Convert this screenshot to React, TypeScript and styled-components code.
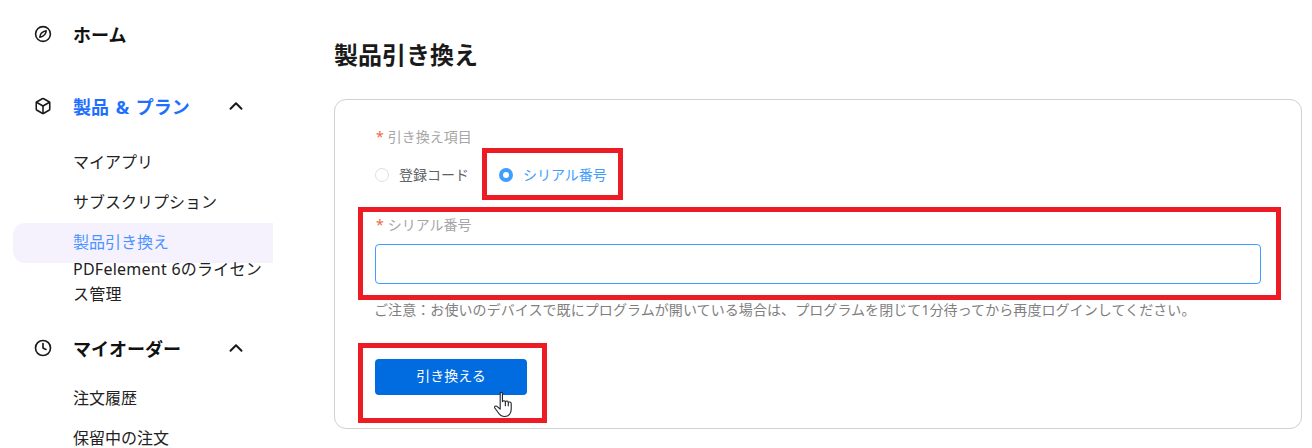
import React from 'react';
import styled, { createGlobalStyle } from 'styled-components';
import { Box, ChevronUp, Clock } from 'lucide-react';

const GlobalStyle = createGlobalStyle`
    html, body {
        margin: 0;
        height: 448px;
        overflow: hidden;
        background: #fff;
    }
    body {
        font-family: 'Noto Sans', 'Noto Sans CJK JP', sans-serif;
    }
`

function CompassIcon() {
    return (
        <svg width="18" height="18" viewBox="0 0 18 18" fill="none" stroke="#1a1a1a" strokeWidth="1.6">
            <circle cx="9" cy="9" r="7.4" />
            <path d="M12.2 5.8 C12 8.8 10 11.4 5.8 12.2 C6 9.2 8 6.6 12.2 5.8 Z" strokeLinejoin="round" />
        </svg>
    );
}

function HandCursor() {
    return (
        <svg width="18" height="25" viewBox="0.5 0.5 16 24.6" preserveAspectRatio="none" fill="#fff" stroke="#23272e" strokeWidth="1" strokeLinejoin="round">
            <path d="M6 1.8 C6 .6 8 .6 8 1.8 V10 C8.6 8.6 10.4 8.8 10.6 10.2 C11.2 9 13 9.2 13.2 10.8 C14 9.8 15.8 10.2 15.8 11.8 V17.5 C15.8 21 14 24.6 10 24.6 C6.6 24.6 5.4 22.8 4 20.4 L1.2 16.2 C.4 14.8 2.2 13.6 3.4 14.8 L6 17.4 Z" />
            <path d="M10.6 10.2 V14.5 M13.2 10.8 V14.5" fill="none" />
        </svg>
    );
}

function App() {
    return (
        <>
        <GlobalStyle />
        <Page>
            <Sidebar>
                <HomeRow>
                    <IconSlot><CompassIcon /></IconSlot>
                    <SectionTitle>ホーム</SectionTitle>
                </HomeRow>

                <SectionRow>
                    <IconSlot><Box size={18} strokeWidth={2.1} color="#1a1a1a" /></IconSlot>
                    <SectionTitle $active>製品 &amp; プラン</SectionTitle>
                    <Chevron><ChevronUp size={22} strokeWidth={2.2} color="#1a1a1a" /></Chevron>
                </SectionRow>
                <SubList>
                    <SubItem>マイアプリ</SubItem>
                    <SubItem>サブスクリプション</SubItem>
                    <SelectedItem>製品引き換え</SelectedItem>
                    <SubItemWrap>PDFelement 6のライセンス管理</SubItemWrap>
                </SubList>

                <OrderRow>
                    <IconSlot><Clock size={18} strokeWidth={2.2} color="#1a1a1a" /></IconSlot>
                    <SectionTitle>マイオーダー</SectionTitle>
                    <Chevron><ChevronUp size={22} strokeWidth={2.2} color="#1a1a1a" /></Chevron>
                </OrderRow>
                <OrderList>
                    <SubItem>注文履歴</SubItem>
                    <SubItem>保留中の注文</SubItem>
                </OrderList>
            </Sidebar>

            <Main>
                <PageTitle>製品引き換え</PageTitle>
                <Card>
                    <FieldLabel><Star>*</Star>引き換え項目</FieldLabel>
                    <RadioRow>
                        <RadioOption>
                            <RadioDot />
                            <RadioText>登録コード</RadioText>
                        </RadioOption>
                        <RadioOption>
                            <RadioDot $checked />
                            <RadioText $checked>シリアル番号</RadioText>
                        </RadioOption>
                    </RadioRow>

                    <SerialLabel><Star>*</Star>シリアル番号</SerialLabel>
                    <SerialInput />
                    <Note>ご注意：お使いのデバイスで既にプログラムが開いている場合は、プログラムを閉じて1分待ってから再度ログインしてください。</Note>

                    <SubmitButton>引き換える</SubmitButton>

                    <RadioCallout />
                    <InputCallout />
                    <ButtonCallout />
                    <Cursor><HandCursor /></Cursor>
                </Card>
            </Main>
        </Page>
        </>
    )
}

const Page = styled.div`
    display: flex;
    align-items: flex-start;
    width: 1312px;
    height: 448px;
    overflow: hidden;
`

const Sidebar = styled.nav`
    width: 260px;
    flex-shrink: 0;
    margin-left: 13px;
    padding-top: 14px;
`

const HomeRow = styled.div`
    display: flex;
    align-items: center;
    height: 40px;
`

const SectionRow = styled(HomeRow)`
    margin-top: 32px;
`

const OrderRow = styled(HomeRow)`
    margin-top: 21px;
`

const IconSlot = styled.span`
    display: flex;
    justify-content: center;
    width: 59px;
    margin-right: 1px;
`

const SectionTitle = styled.div<{ $active?: boolean }>`
    font-size: 18px;
    font-weight: 700;
    word-spacing: ${props => props.$active ? '2px' : '0'};
    color: ${props => props.$active ? '#1f6fff' : '#111'};
    flex: 1;
`

const Chevron = styled.span`
    display: flex;
    margin-right: 26px;
`

const SubList = styled.div`
    margin-top: 15px;
`

const OrderList = styled(SubList)`
    margin-top: 9px;
`

const SubItem = styled.div`
    display: flex;
    align-items: center;
    box-sizing: border-box;
    height: 40px;
    padding-left: 60px;
    font-size: 16px;
    color: #222;
`

const SelectedItem = styled(SubItem)`
    margin-top: 2px;
    padding-bottom: 4px;
    color: #4b93ff;
    background: #f5f2fe;
    border-radius: 12px 0 0 12px;
`

const SubItemWrap = styled.div`
    padding: 0 0 0 60px;
    font-size: 16px;
    line-height: 25px;
    letter-spacing: 0.25px;
    color: #222;
    margin-top: -6px;
`

const Main = styled.main`
    flex: 1;
    margin-left: 61px;
    margin-right: 10px;
    padding-top: 38px;
`

const PageTitle = styled.h1`
    margin: 0;
    font-size: 24px;
    font-weight: 700;
    line-height: 34px;
    color: #1a1a1a;
`

const Card = styled.section`
    position: relative;
    box-sizing: border-box;
    height: 330px;
    margin-top: 27px;
    padding: 27px 40px 0;
    border: 1px solid #d0d0d0;
    border-radius: 12px;
`

const FieldLabel = styled.div`
    font-size: 14px;
    line-height: 20px;
    color: #a6a6a6;
`

const SerialLabel = styled(FieldLabel)`
    margin-top: 30px;
`

const Star = styled.span`
    color: #f2683c;
    margin: 0 4px 0 1px;
`

const RadioRow = styled.div`
    display: flex;
    gap: 30px;
    margin-top: 18px;
`

const RadioOption = styled.label`
    display: flex;
    align-items: center;
    gap: 10px;
    height: 20px;
`

const RadioDot = styled.span<{ $checked?: boolean }>`
    box-sizing: border-box;
    width: 14px;
    height: 14px;
    border-radius: 50%;
    background: #fff;
    border: ${props => props.$checked ? '4px solid #409eff' : '1px solid #dcdfe6'};
`

const RadioText = styled.span<{ $checked?: boolean }>`
    font-size: 14px;
    padding-bottom: 2px;
    color: ${props => props.$checked ? '#409eff' : '#606266'};
`

const SerialInput = styled.div`
    box-sizing: border-box;
    width: 886px;
    height: 40px;
    margin-top: 9px;
    border: 1px solid #409eff;
    border-radius: 4px;
`

const Note = styled.p`
    margin: 16px 0 0 -1px;
    font-size: 14px;
    line-height: 20px;
    letter-spacing: 0.08px;
    color: #808080;
`

const SubmitButton = styled.button`
    display: block;
    width: 152px;
    height: 36px;
    margin-top: 39px;
    padding: 0 0 5px;
    border: 0;
    border-radius: 4px;
    background: #006ce0;
    color: #fff;
    font-family: inherit;
    font-size: 14px;
`

const Callout = styled.div`
    position: absolute;
    box-sizing: border-box;
    border: 5px solid #ed1c24;
    pointer-events: none;
`

const RadioCallout = styled(Callout)`
    left: 147px;
    top: 48px;
    width: 141px;
    height: 52px;
`

const InputCallout = styled(Callout)`
    left: 23px;
    top: 107px;
    width: 923px;
    height: 93px;
`

const ButtonCallout = styled(Callout)`
    left: 23px;
    top: 243px;
    width: 189px;
    height: 80px;
`

const Cursor = styled.span`
    position: absolute;
    left: 159px;
    top: 292px;
    display: flex;
`

export default App;
